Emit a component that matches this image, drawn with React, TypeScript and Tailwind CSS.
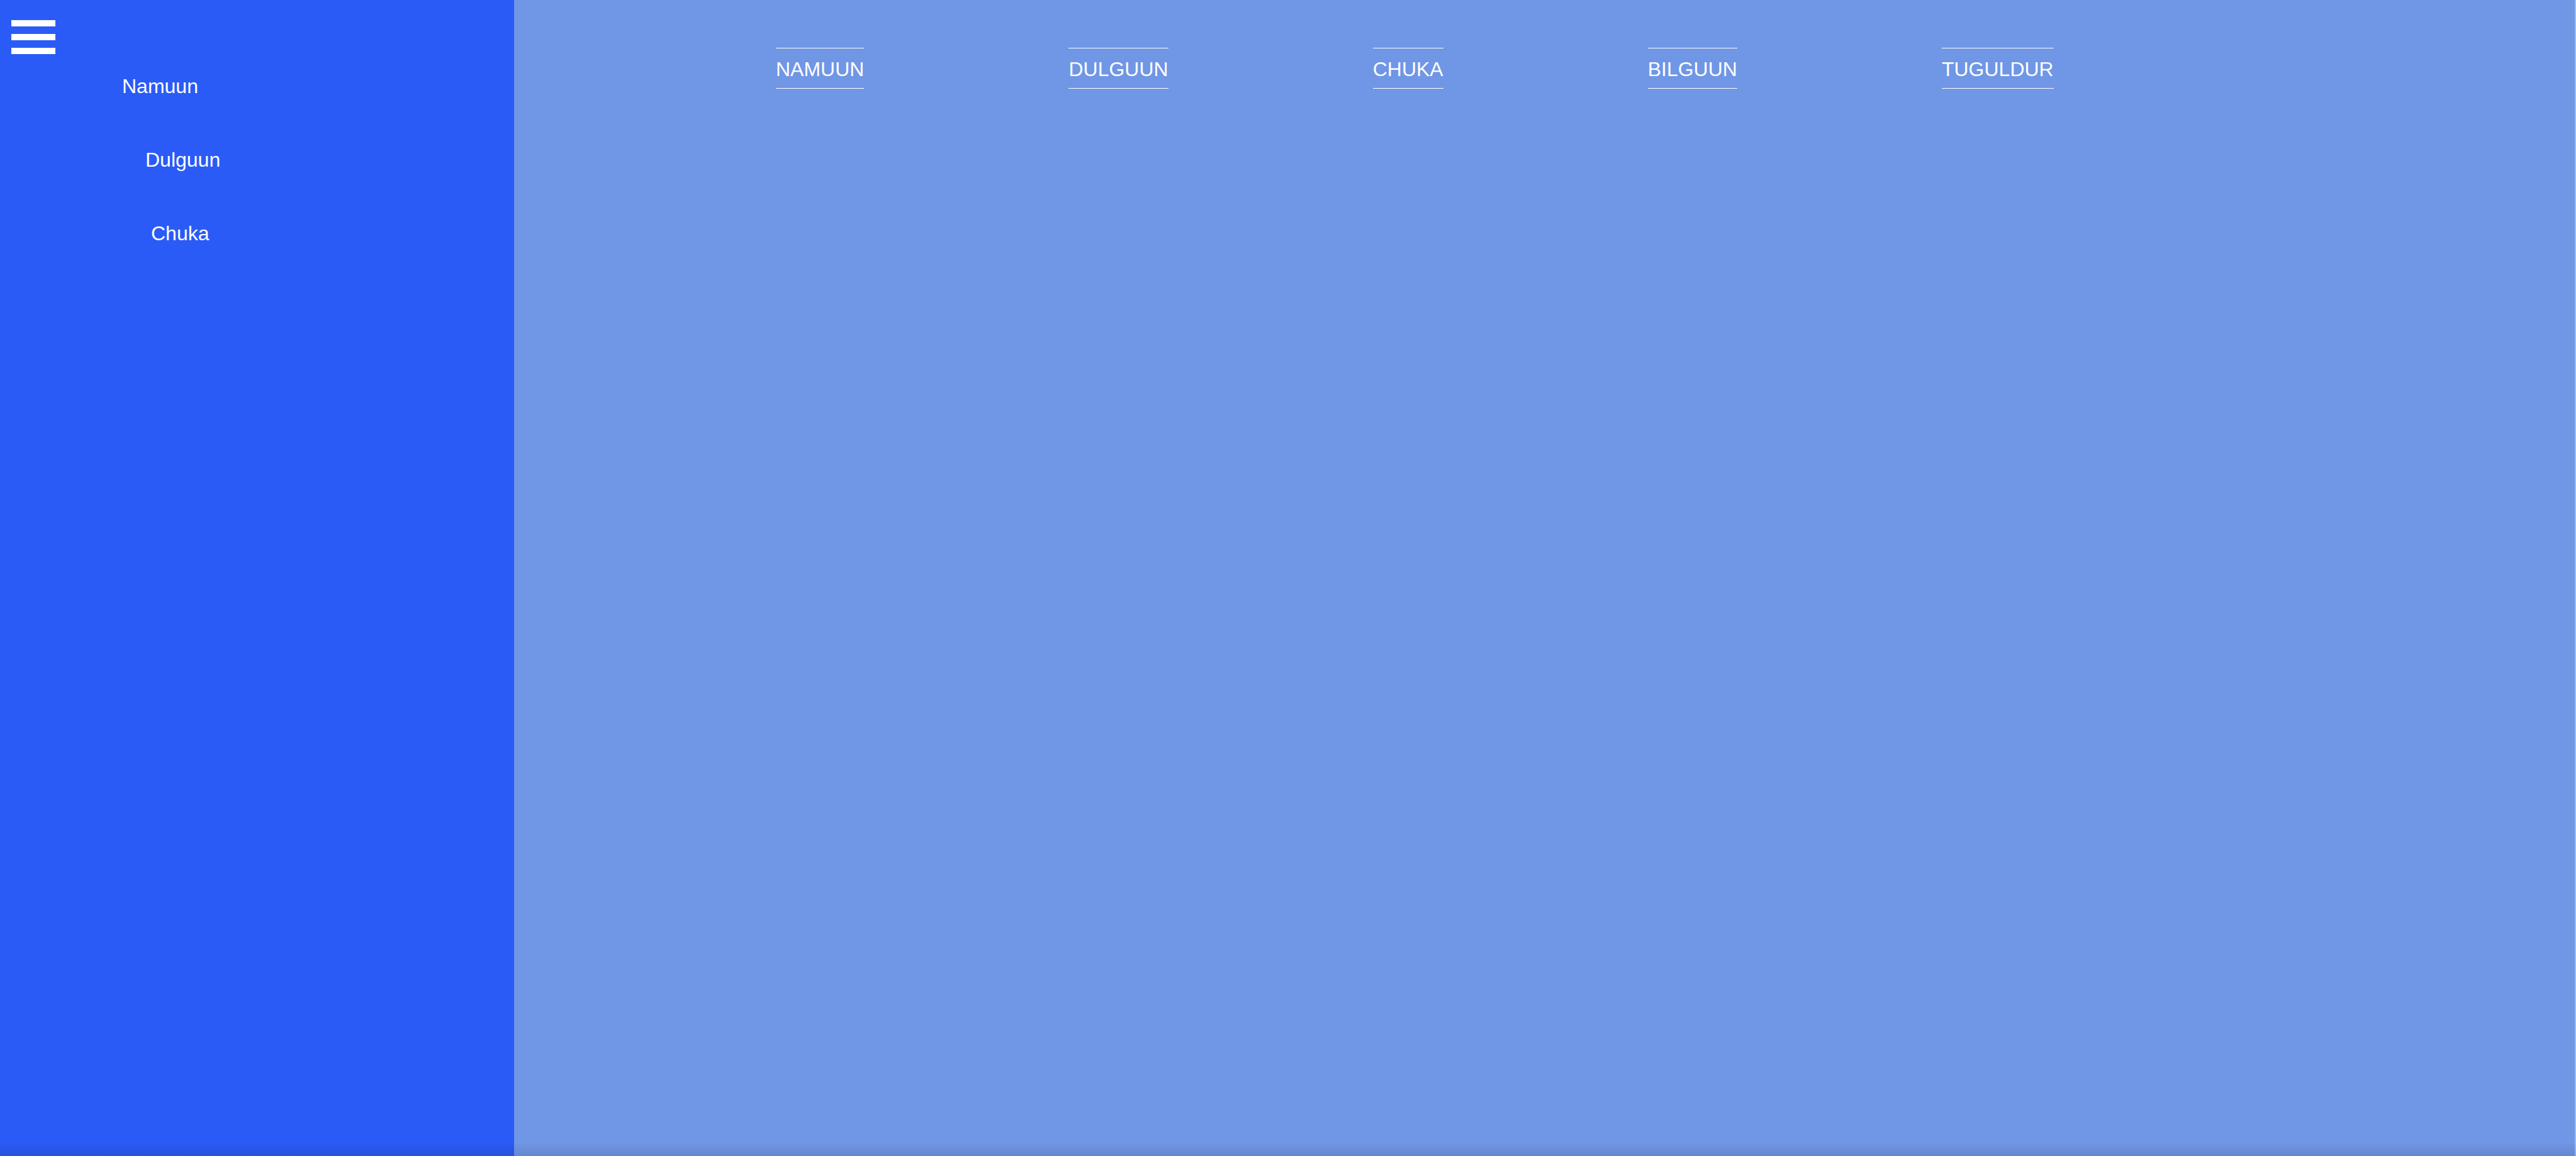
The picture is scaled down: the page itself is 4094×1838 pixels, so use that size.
const sideItems = [
  { name: "Namuun", offset: "ml-[194px]" },
  { name: "Dulguun", offset: "ml-[231px]" },
  { name: "Chuka", offset: "ml-[240px]" },
];

const navItems = ["NAMUUN", "DULGUUN", "CHUKA", "BILGUUN", "TUGULDUR"];

export default function App() {
  return (
    <div
      className="relative flex h-screen w-full overflow-hidden text-white"
      style={{ fontFamily: '"Liberation Sans", Arial, sans-serif' }}
    >
      {/* Sidebar */}
      <aside className="flex w-[817px] shrink-0 flex-col bg-[#2b5bf6]">
        <button className="ml-[18px] mt-[32px] flex w-[70px] flex-col gap-[12px]">
          <span className="block h-[10px] w-[70px] bg-white" />
          <span className="block h-[10px] w-[70px] bg-white" />
          <span className="block h-[10px] w-[70px] bg-white" />
        </button>
        <ul className="mt-[33px] flex flex-col gap-[80px]">
          {sideItems.map((item) => (
            <li key={item.name} className={`${item.offset} text-[32px] leading-[37px]`}>
              {item.name}
            </li>
          ))}
        </ul>
      </aside>

      {/* Main */}
      <main className="flex-1 border-r-2 border-[#a3b9ef] bg-[#7096e6]">
        <nav className="flex gap-[325px] pl-[416px] pt-[76px]">
          {navItems.map((item) => (
            <a
              key={item}
              className="border-y border-white pb-[11px] pt-[15px] text-[32px] leading-[37px]"
            >
              {item}
            </a>
          ))}
        </nav>
      </main>

      {/* bottom shade */}
      <div className="pointer-events-none absolute bottom-0 left-0 h-[22px] w-full bg-gradient-to-b from-transparent to-black/10" />
    </div>
  );
}
